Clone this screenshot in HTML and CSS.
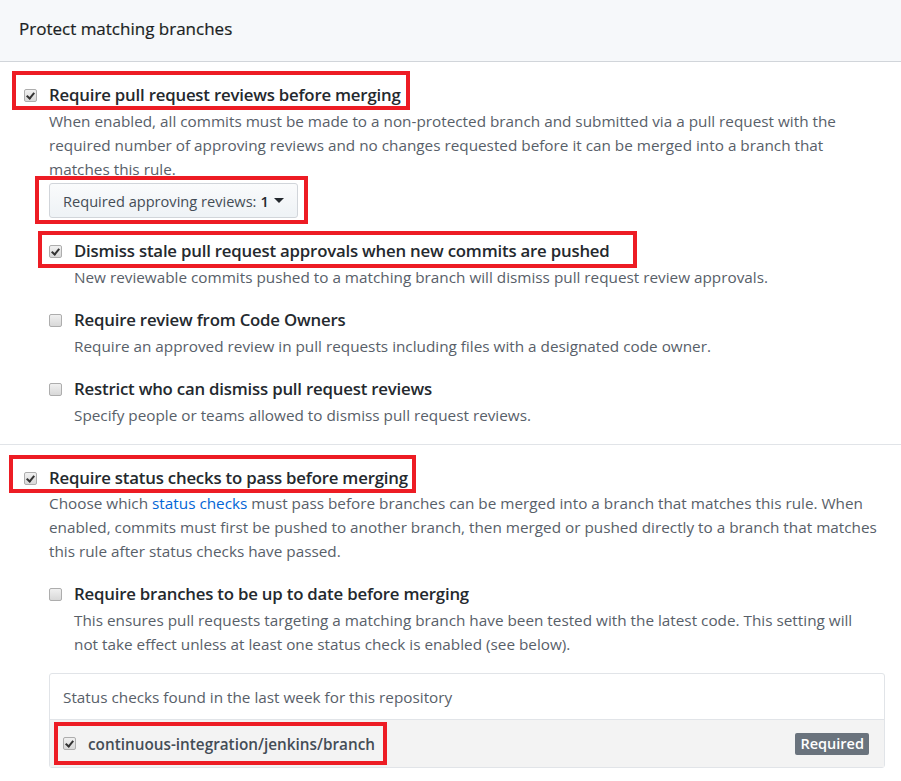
FILE: index.html
```html
<!DOCTYPE html>
<html lang="en">
<head>
<meta charset="utf-8">
<title>Protect matching branches</title>
<link rel="stylesheet" href="styles.css">
</head>
<body>
<div class="box">
  <div class="box-header">Protect matching branches</div>
  <div class="section first">
    <div class="option">
      <label class="opt-title"><span class="mark mark-1"><span class="cb checked"></span><span>Require pull request reviews before merging</span></span></label>
      <p class="note">When enabled, all commits must be made to a non-protected branch and submitted via a pull request with the required number of approving reviews and no changes requested before it can be merged into a branch that matches this rule.</p>
      <div class="select-row"><span class="mark mark-2"><button class="btn" type="button">Required approving reviews: <strong>1</strong><span class="caret"></span></button></span></div>
      <div class="sub">
        <div class="option">
          <label class="opt-title"><span class="mark mark-3"><span class="cb checked"></span><span>Dismiss stale pull request approvals when new commits are pushed</span></span></label>
          <p class="note">New reviewable commits pushed to a matching branch will dismiss pull request review approvals.</p>
        </div>
        <div class="option">
          <label class="opt-title"><span class="cb"></span><span>Require review from Code Owners</span></label>
          <p class="note">Require an approved review in pull requests including files with a designated code owner.</p>
        </div>
        <div class="option">
          <label class="opt-title"><span class="cb"></span><span>Restrict who can dismiss pull request reviews</span></label>
          <p class="note">Specify people or teams allowed to dismiss pull request reviews.</p>
        </div>
      </div>
    </div>
  </div>
  <div class="section second">
    <div class="option">
      <label class="opt-title"><span class="mark mark-4"><span class="cb checked"></span><span>Require status checks to pass before merging</span></span></label>
      <p class="note">Choose which <a href="#">status checks</a> must pass before branches can be merged into a branch that matches this rule. When enabled, commits must first be pushed to another branch, then merged or pushed directly to a branch that matches this rule after status checks have passed.</p>
      <div class="sub">
        <div class="option">
          <label class="opt-title"><span class="cb"></span><span>Require branches to be up to date before merging</span></label>
          <p class="note">This ensures pull requests targeting a matching branch have been tested with the latest code. This setting will not take effect unless at least one status check is enabled (see below).</p>
        </div>
        <div class="checks">
          <div class="checks-header">Status checks found in the last week for this repository</div>
          <div class="checks-row">
            <span class="mark mark-5"><span class="cb checked"></span><span class="check-name">continuous-integration/jenkins/branch</span></span>
            <span class="label">Required</span>
          </div>
        </div>
      </div>
    </div>
  </div>
</div>
</body>
</html>
```

FILE: styles.css
```css
* { box-sizing: border-box; }
html, body { margin: 0; padding: 0; background: #fff; }
body {
  font-family: "Open Sans", "Segoe UI", "Noto Sans", sans-serif;
  color: #24292e;
  width: 901px;
  overflow: hidden;
}
.box { width: 901px; }
.box-header {
  background: #f6f8fa;
  border-bottom: 1px solid #d1d5da;
  height: 62px;
  padding: 16px 19px 0;
  font-size: 17px;
  line-height: 26px;
  color: #1b1f23;
  -webkit-text-stroke: 0.2px #1b1f23;
}
.section { padding-left: 24px; padding-right: 16px; }
.section.first { padding-top: 20px; padding-bottom: 17px; border-bottom: 1px solid #e1e4e8; }
.section.second { padding-top: 20px; }
.opt-title {
  display: flex;
  align-items: center;
  font-size: 16.8px;
  font-weight: 600;
  line-height: 26px;
  letter-spacing: -0.2px;
  color: #24292e;
}
.opt-title > span, .mark { display: inline-flex; align-items: center; }
.cb {
  width: 13px;
  height: 13px;
  border: 1px solid #adadad;
  border-radius: 2px;
  background: linear-gradient(#f0f0f0, #d8d8d8);
  margin-right: 12px;
  flex: none;
  position: relative;
}
.cb.checked::after {
  content: "";
  position: absolute;
  left: 3px;
  top: 1px;
  width: 3px;
  height: 6px;
  border: solid #333;
  border-width: 0 2px 2px 0;
  transform: rotate(40deg);
}
.note {
  margin: 1px 0 0 25px;
  max-width: 835px;
  font-size: 15.3px;
  line-height: 24px;
  color: #586069;
}
.second > .option > .note { margin-top: 0; }
.sub .note { max-width: 800px; }
.note a { color: #0366d6; text-decoration: none; }
.option + .option { margin-top: 18px; }
.sub { margin-left: 25px; }
.select-row { margin: 2px 0 0 25px; }
.btn {
  display: inline-flex;
  align-items: center;
  height: 35px;
  padding: 0 13px;
  font-family: inherit;
  font-size: 14.6px;
  color: #444d56;
  background: linear-gradient(#fafbfc, #eff3f6 90%);
  border: 1px solid #d1d5da;
  border-radius: 3px;
}
.btn strong { font-weight: 600; color: #24292e; margin-left: 4px; }
.caret {
  margin-left: 5px;
  border-left: 5px solid transparent;
  border-right: 5px solid transparent;
  border-top: 5px solid #24292e;
}
.first .sub { margin-top: 20px; }
.second .sub { margin-top: 18px; }
.mark { position: relative; }
.mark::after {
  content: "";
  position: absolute;
  border: 4px solid #ed1c24;
  pointer-events: none;
}
.mark-1::after { left: -12px; top: -11px; right: -9px; bottom: -2px; }
.mark-2::after { left: -14px; top: -7px; right: -10px; bottom: -6px; }
.mark-3::after { left: -11px; top: -7px; right: -27px; bottom: -4px; }
.mark-4::after { left: -15px; top: -10px; right: -8px; bottom: -2px; }
.mark-5::after { left: -9px; top: -12px; right: -12px; bottom: -11px; }
.checks {
  margin-top: 17px;
  border: 1px solid #e1e4e8;
  border-radius: 3px;
  width: 836px;
}
.checks-header {
  height: 46px;
  padding: 0 13px;
  display: flex;
  align-items: center;
  font-size: 15.3px;
  color: #586069;
  border-bottom: 1px solid #e1e4e8;
}
.checks-row {
  height: 47px;
  background: #f3f3f3;
  display: flex;
  align-items: center;
  justify-content: space-between;
  padding: 0 15px 0 13px;
}
.check-name { font-size: 15.3px; font-weight: 600; color: #444d56; }
.label {
  background: #6a737d;
  color: #fff;
  font-size: 14.5px;
  font-weight: 600;
  padding: 1px 5px;
  border-radius: 2px;
  line-height: 20px;
}
```
